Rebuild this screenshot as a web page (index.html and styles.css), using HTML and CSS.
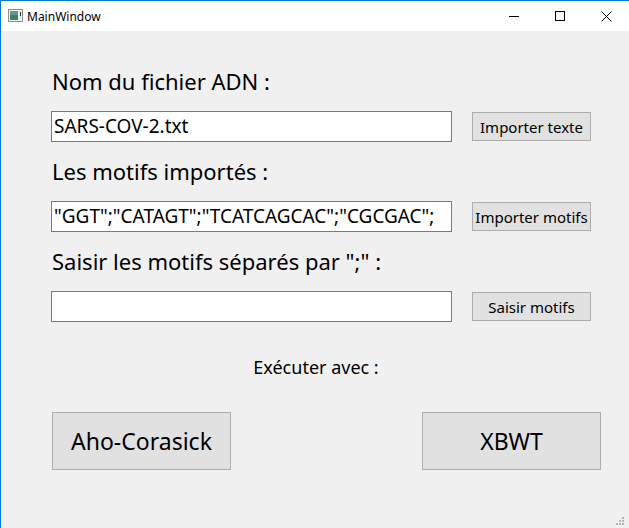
FILE: index.html
```html
<!DOCTYPE html>
<html lang="fr">
<head>
<meta charset="utf-8">
<title>MainWindow</title>
<link rel="stylesheet" href="styles.css">
</head>
<body>
<div class="window">
  <div class="titlebar">
    <svg class="app-icon" width="16" height="16" viewBox="0 0 16 16">
      <rect x="0.5" y="1.5" width="14" height="12" fill="#f4f4f4" stroke="#8c8c8c"/>
      <rect x="2" y="3" width="8" height="9" fill="#3d7f6e"/>
      <rect x="2" y="3" width="8" height="4" fill="#5b9a8c"/>
      <rect x="11" y="3" width="2" height="9" fill="#e6e6e6"/>
      <rect x="12" y="4" width="1" height="4" fill="#333"/>
    </svg>
    <span class="title">MainWindow</span>
    <div class="controls">
      <div class="ctl"><svg width="10" height="10" viewBox="0 0 10 10"><path d="M0 5.5H10" stroke="#000" stroke-width="1"/></svg></div>
      <div class="ctl"><svg width="10" height="10" viewBox="0 0 10 10"><rect x="0.5" y="0.5" width="9" height="9" fill="none" stroke="#000"/></svg></div>
      <div class="ctl"><svg width="11" height="11" viewBox="0 0 11 11"><path d="M0.5 0.5L10.5 10.5M10.5 0.5L0.5 10.5" stroke="#000" stroke-width="1"/></svg></div>
    </div>
  </div>
  <div class="content">
    <section class="group">
      <div class="label">Nom du fichier ADN :</div>
      <div class="row">
        <div class="field">SARS-COV-2.txt</div>
        <button class="btn">Importer texte</button>
      </div>
    </section>
    <section class="group">
      <div class="label">Les motifs importés :</div>
      <div class="row">
        <div class="field">"GGT";"CATAGT";"TCATCAGCAC";"CGCGAC";</div>
        <button class="btn">Importer motifs</button>
      </div>
    </section>
    <section class="group">
      <div class="label">Saisir les motifs séparés par ";" :</div>
      <div class="row">
        <div class="field"></div>
        <button class="btn">Saisir motifs</button>
      </div>
    </section>
    <div class="exec">Exécuter avec :</div>
    <div class="run-row">
      <button class="big">Aho-Corasick</button>
      <button class="big">XBWT</button>
    </div>
    <svg class="grip" width="10" height="10" viewBox="0 0 10 10">
      <rect x="6" y="0" width="2" height="2" fill="#b4b4b4"/>
      <rect x="3" y="3" width="2" height="2" fill="#b4b4b4"/>
      <rect x="6" y="3" width="2" height="2" fill="#b4b4b4"/>
      <rect x="0" y="6" width="2" height="2" fill="#b4b4b4"/>
      <rect x="3" y="6" width="2" height="2" fill="#b4b4b4"/>
      <rect x="6" y="6" width="2" height="2" fill="#b4b4b4"/>
    </svg>
  </div>
</div>
</body>
</html>
```
FILE: styles.css
```css
html, body {
  margin: 0;
  padding: 0;
  background: #f0f0f0;
}
body {
  font-family: "Noto Sans", "Open Sans", sans-serif;
  color: #000;
  overflow: hidden;
}
.window {
  width: 628px;
  height: 527px;
  border-top: 1px solid #0078d7;
  border-left: 1px solid #0078d7;
  display: flex;
  flex-direction: column;
  position: relative;
}
.titlebar {
  height: 30px;
  background: #fff;
  display: flex;
  align-items: center;
  flex: none;
}
.app-icon {
  margin-left: 7px;
}
.title {
  margin-left: 3px;
  font-size: 12px;
  color: #000;
}
.controls {
  margin-left: auto;
  display: flex;
  height: 30px;
}
.ctl {
  width: 46px;
  height: 30px;
  display: flex;
  align-items: center;
  justify-content: center;
}
.content {
  flex: 1;
  background: #f0f0f0;
  padding: 35px 0 0 50px;
  position: relative;
}
.group {
  height: 90px;
}
.label {
  height: 30px;
  line-height: 30px;
  font-size: 22px;
  margin-left: 1px;
  white-space: nowrap;
}
.row {
  margin-top: 15px;
  display: flex;
  align-items: flex-start;
}
.field {
  width: 397px;
  height: 29px;
  border: 1px solid #7a7a7a;
  background: #fff;
  font-size: 19px;
  line-height: 29px;
  padding-left: 2px;
  white-space: nowrap;
  overflow: hidden;
}
.btn {
  margin-left: 20px;
  margin-top: 1px;
  width: 119px;
  height: 29px;
  background: #e1e1e1;
  border: 1px solid #adadad;
  font-family: inherit;
  font-size: 15px;
  color: #000;
  padding: 0;
}
.exec {
  margin-top: 16px;
  height: 30px;
  line-height: 30px;
  text-align: center;
  font-size: 18px;
  width: 530px;
}
.run-row {
  margin-top: 30px;
  display: flex;
  justify-content: space-between;
  width: 549px;
  margin-left: 1px;
}
.big {
  width: 179px;
  height: 58px;
  background: #e1e1e1;
  border: 1px solid #adadad;
  font-family: inherit;
  font-size: 23px;
  color: #000;
  padding: 0;
}
.grip {
  position: absolute;
  right: 3px;
  bottom: 1px;
}
```
